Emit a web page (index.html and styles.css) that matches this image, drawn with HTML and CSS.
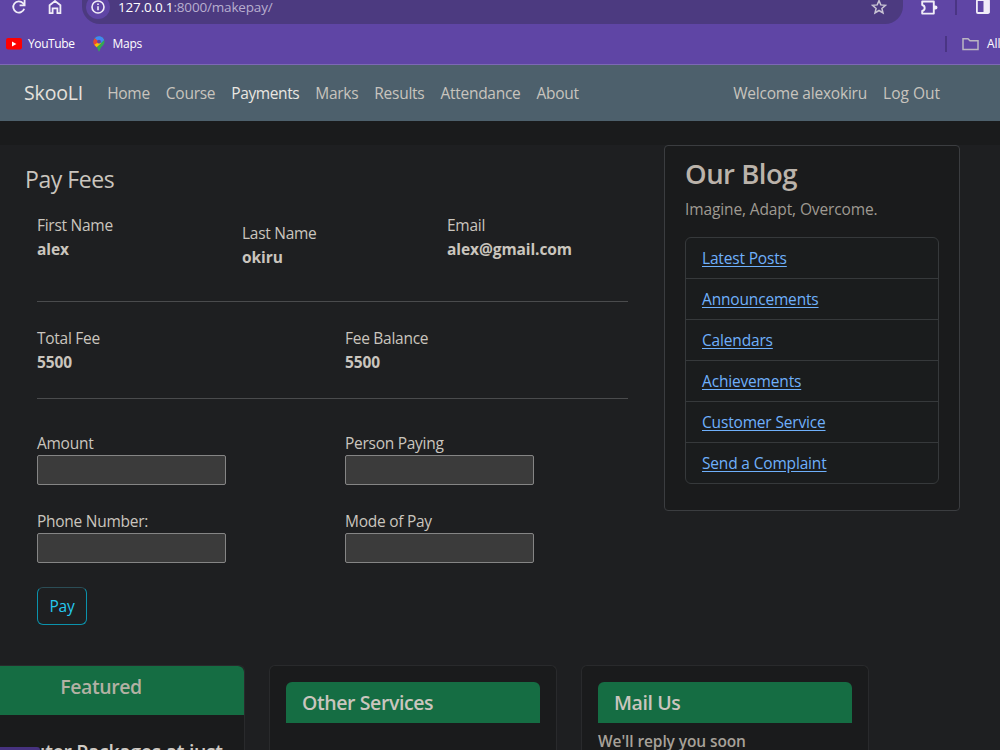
FILE: index.html
```
<!DOCTYPE html>
<html lang="en">
<head>
  <meta charset="UTF-8">
  <meta name="viewport" content="width=device-width, initial-scale=1.0">
  <title>SkooLI - Payments</title>
  <link rel="stylesheet" href="styles.css">
</head>
<body>

<div class="browser">
  <div class="toolbar">
    <svg class="reload" width="16" height="16" viewBox="0 0 16 16" fill="none" stroke="#f1edf8" stroke-width="1.8">
      <path d="M13.2 9.7A5.6 5.6 0 1 1 12 4.2l1.3 1.4"/>
      <path d="M13.6 1v5.3H8.6"/>
    </svg>
    <svg class="home" width="14" height="16" viewBox="0 0 14 16" fill="none" stroke="#f1edf8" stroke-width="1.8">
      <path d="M1.6 6.2L7 2l5.4 4.2v8H9.4V9.3H4.6v4.9h-3z"/>
    </svg>
    <div class="address">
      <span class="info">
        <svg width="14" height="14" viewBox="0 0 14 14" fill="none" stroke="#f1edf8" stroke-width="1.6">
          <circle cx="7" cy="7" r="6"/>
          <path d="M7 6.2v4M7 3.6v1.5"/>
        </svg>
      </span>
      <span class="url">127.0.0.1<i>:8000/makepay/</i></span>
      <svg class="star" width="16" height="16" viewBox="0 0 16 16" fill="none" stroke="#c9c4d4" stroke-width="1.5">
        <path d="M8 1.6l1.8 4.3 4.7.4-3.6 3.1 1.1 4.6L8 11.5 4 14l1.1-4.6L1.5 6.3l4.7-.4z"/>
      </svg>
    </div>
    <svg class="puzzle" width="18" height="16" viewBox="0 0 18 16" fill="none" stroke="#f1edf8" stroke-width="1.9" stroke-linejoin="round">
      <path d="M2.200 1.500H13.800V13.600H2.200V11C5.500 10.300 5.500 5.700 2.200 5z"/>
      <path d="M14 5.400h1.400a2.100 2.100 0 0 1 0 4.200H14z" fill="#f1edf8" stroke="none"/>
    </svg>
    <span class="divider"></span>
    <svg class="panel" width="16" height="16" viewBox="0 0 16 16">
      <rect x="1.900" y="0" width="12" height="13" rx="1" fill="none" stroke="#f1edf8" stroke-width="1.800"/>
      <rect x="8.500" y="0" width="6" height="13" fill="#f1edf8"/>
    </svg>
  </div>
  <div class="bookmarks">
    <svg width="16" height="12" viewBox="0 0 16 12">
      <rect width="16" height="11.500" rx="2.200" fill="#f00"/>
      <path d="M6 3.400v5l4.400-2.500z" fill="#fff"/>
    </svg>
    <span class="bookmark">YouTube</span>
    <svg class="maps" width="12" height="16" viewBox="0 0 12 16">
      <path d="M6 15.500c-.7 0-.7-2-2-4C2.700 9.700.5 8.500.5 5.700a5.500 5.500 0 0 1 11 0c0 2.800-2.200 4-3.500 5.800-1.300 2-1.300 4-2 4z" fill="#34a853"/>
      <path d="M1.800 2.200a5.500 5.500 0 0 1 9.400 1.700L6.500 8.500z" fill="#4285f4"/>
      <path d="M1.800 2.200L6 5.700 2 10a6 6 0 0 1-.2-7.800z" fill="#ea4335"/>
      <path d="M6 5.700l2 1.500-4.500 4.100-2.100-2.600z" fill="#fbbc04"/>
      <circle cx="6" cy="5.700" r="1.900" fill="#5f45a5"/>
    </svg>
    <span class="bookmark">Maps</span>
    <span class="divider right"></span>
    <svg width="17" height="14" viewBox="0 0 17 14" fill="none" stroke="#bbb6c2" stroke-width="1.500">
      <path d="M1 1.800h5l2 2h8v8.700H1z"/>
    </svg>
    <span class="bookmark all">All</span>
  </div>
</div>

<nav class="navbar">
  <a class="brand">SkooLI</a>
  <a class="link">Home</a>
  <a class="link">Course</a>
  <a class="link active">Payments</a>
  <a class="link">Marks</a>
  <a class="link">Results</a>
  <a class="link">Attendance</a>
  <a class="link">About</a>
  <a class="link welcome">Welcome alexokiru</a>
  <a class="link logout">Log Out</a>
</nav>

<main class="content">
  <section class="payment">
    <h4>Pay Fees</h4>
    <div class="row names">
      <div>First Name<br><b>alex</b></div>
      <div class="last-name">Last Name<br><b>okiru</b></div>
      <div>Email<br><b>alex@gmail.com</b></div>
    </div>
    <hr>
    <div class="row fees">
      <div>Total Fee<br><b>5500</b></div>
      <div>Fee Balance<br><b>5500</b></div>
    </div>
    <hr>
    <form>
      <div class="row fields">
        <label>Amount<input type="text"></label>
        <label>Person Paying<input type="text"></label>
        <label>Phone Number:<input type="text"></label>
        <label>Mode of Pay<input type="text"></label>
      </div>
      <button type="button" class="pay">Pay</button>
    </form>
  </section>

  <aside class="blog">
    <h3>Our Blog</h3>
    <p>Imagine, Adapt, Overcome.</p>
    <ul>
      <li><a href="#">Latest Posts</a></li>
      <li><a href="#">Announcements</a></li>
      <li><a href="#">Calendars</a></li>
      <li><a href="#">Achievements</a></li>
      <li><a href="#">Customer Service</a></li>
      <li><a href="#">Send a Complaint</a></li>
    </ul>
  </aside>
</main>

<footer class="cards">
  <div class="card featured">
    <h5>Featured</h5>
    <p>Computer Packages at just</p>
  </div>
  <div class="card">
    <h5>Other Services</h5>
  </div>
  <div class="card">
    <h5>Mail Us</h5>
    <p>We'll reply you soon</p>
  </div>
</footer>

<div class="status"></div>

</body>
</html>
```
FILE: styles.css
```
* {
  box-sizing: border-box;
}
body {
  margin: 0;
  height: 750px;
  overflow: hidden;
  display: flex;
  flex-direction: column;
  background: #1e1f21;
  color: #cac5be;
  font-family: "Open Sans", "Noto Sans", sans-serif;
  font-size: 15.5px;
  line-height: 24px;
  letter-spacing: -0.27px;
}
h3, h4, h5, p, ul {
  margin: 0;
  padding: 0;
}
b {
  letter-spacing: -0.08px;
}
svg {
  flex: none;
}

/* browser bar */
.browser {
  height: 65px;
  flex: none;
  background: #5f45a5;
  border-bottom: 1px solid #7d68b5;
  color: #fff;
}
.toolbar {
  display: flex;
  height: 24px;
}
.reload {
  margin-left: 11px;
  margin-top: -1px;
}
.home {
  margin-left: 21px;
  margin-top: -1px;
}
.address {
  display: flex;
  width: 821px;
  height: 24px;
  margin-left: 20px;
  padding: 0 16px 0 4px;
  border-radius: 0 0 18px 18px;
  background: #4c3a80;
}
.info {
  display: flex;
  align-items: center;
  justify-content: center;
  width: 24px;
  height: 24px;
  margin-top: -5px;
  border-radius: 50%;
  background: #5f45a5;
}
.url {
  margin-left: 8px;
  font-size: 13.5px;
  line-height: 15px;
  letter-spacing: -0.17px;
}
.url i {
  font-style: normal;
  color: #b8aecf;
}
.star {
  margin-left: auto;
  margin-top: -1px;
}
.puzzle {
  margin-left: 17px;
}
.divider {
  width: 2px;
  height: 16px;
  margin-left: 17px;
  margin-top: -1px;
  background: #4a3584;
}
.panel {
  margin-left: 18px;
}
.bookmarks {
  display: flex;
  align-items: center;
  height: 40px;
  padding-left: 6px;
}
.bookmark {
  margin-left: 6px;
  font-size: 12px;
  letter-spacing: -0.4px;
}
.maps {
  margin-left: 18px;
}
.maps + .bookmark {
  margin-left: 8px;
  letter-spacing: -0.3px;
}
.divider.right {
  margin-left: auto;
  margin-top: 0;
}
.divider.right + svg {
  margin-left: 15px;
}
.bookmark.all {
  width: 13px;
  margin-left: 8px;
  letter-spacing: -0.1px;
  white-space: nowrap;
}

/* navbar */
.navbar {
  display: flex;
  align-items: center;
  flex: none;
  height: 56px;
  padding: 0 60px 0 24px;
  background: #4d606c;
}
.brand {
  margin-right: 24px;
  font-size: 19.5px;
  letter-spacing: -0.15px;
  color: #e5e1dc;
}
.link {
  margin-right: 16px;
  color: #c8c4be;
}
.link.active {
  letter-spacing: -0.4px;
  color: #eae7e2;
}
.link.welcome {
  margin-left: auto;
  letter-spacing: -0.2px;
}
.link.logout {
  margin-right: 0;
  letter-spacing: 0;
}

/* page */
.content {
  display: flex;
  flex: none;
  height: 520px;
  background: linear-gradient(#1a1b1c 24px, transparent 24px);
}
.payment {
  width: 640px;
  padding: 44px 12px 0 25px;
  margin-right: 24px;
}
h4 {
  font-size: 23px;
  font-weight: 400;
  line-height: 29px;
  letter-spacing: -0.45px;
}
.row {
  display: grid;
  margin-left: 12px;
}
.names {
  grid-template-columns: repeat(3, 205px);
  margin-top: 19px;
  height: 88px;
}
.last-name {
  padding-top: 8px;
}
hr {
  height: 1px;
  margin: 0 0 0 12px;
  border: 0;
  background: #4a4b4d;
}
.fees {
  grid-template-columns: 308px 200px;
  height: 96px;
  padding-top: 24px;
}
.fields {
  grid-template-columns: 308px 200px;
  row-gap: 24px;
  padding-top: 32px;
}
label {
  height: 54px;
}
input {
  display: block;
  width: 189px;
  height: 30px;
  border: 1px solid #858585;
  border-radius: 2px;
  background: #3b3b3b;
}
.pay {
  width: 50px;
  height: 38px;
  margin: 24px 0 0 12px;
  padding: 0;
  border: 1px solid #0b92ac;
  border-top-color: #2b4d56;
  border-radius: 6px;
  background: transparent;
  color: #25c9ef;
  font: inherit;
  letter-spacing: -0.2px;
}

/* blog */
.blog {
  width: 296px;
  height: 366px;
  margin-top: 24px;
  padding: 11px 20px;
  border: 1px solid #3b3d40;
  border-radius: 4px;
  background: #1a1b1c;
}
h3 {
  font-size: 27.5px;
  font-weight: 600;
  line-height: 34px;
  letter-spacing: -0.5px;
  color: #bbb3aa;
}
.blog p {
  margin-top: 6px;
  letter-spacing: -0.12px;
  color: #9f9a92;
}
.blog ul {
  margin-top: 16px;
  border: 1px solid #36393b;
  border-radius: 6px;
  background: #1a1c1d;
  list-style: none;
}
.blog li {
  height: 41px;
  padding: 8px 16px;
  border-bottom: 1px solid #36393b;
  letter-spacing: -0.17px;
}
.blog li:last-child {
  height: 40px;
  border-bottom: 0;
}
.blog a {
  color: #6fb0fb;
  text-underline-offset: 2px;
}

/* bottom cards */
.cards {
  display: flex;
  flex: none;
  gap: 24px;
  height: 85px;
  margin-left: -43px;
  margin-top: 24px;
}
.card {
  flex: none;
  width: 288px;
  height: 85px;
  padding: 16px 16px 0;
  border: 1px solid #292a2c;
  border-bottom: 0;
  border-radius: 6px 6px 0 0;
  background: #1a1b1c;
  font-weight: 600;
}
h5 {
  height: 41px;
  padding: 9px 16px 0;
  border-radius: 6px 6px 0 0;
  background: #156d43;
  font-size: 19.5px;
  font-weight: 600;
  letter-spacing: -0.4px;
}
.card p {
  margin-top: 7px;
  font-size: 15.5px;
  line-height: 22px;
  letter-spacing: -0.1px;
  color: #a7a199;
}
.featured {
  padding: 0;
  text-align: center;
}
.featured h5 {
  height: 49px;
  color: #b3b1a4;
}
.featured p {
  margin-top: 25px;
  font-size: 19.5px;
  line-height: 24px;
  letter-spacing: -0.3px;
  color: #d0cbc4;
}

/* link status bubble at the window corner */
.status {
  position: absolute;
  left: 0;
  bottom: 0;
  width: 40px;
  height: 3px;
  border-radius: 0 3px 0 0;
  background: #46327f;
}
```
